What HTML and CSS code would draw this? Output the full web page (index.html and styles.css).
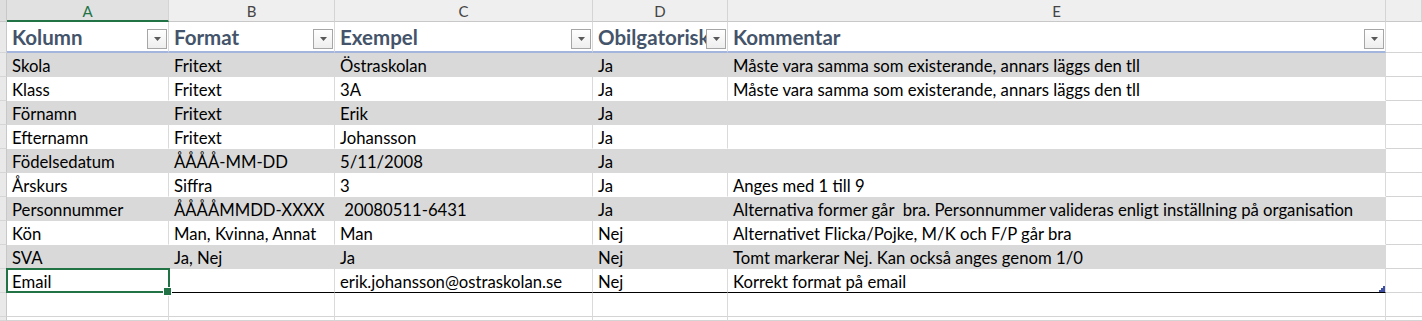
FILE: index.html
```html
<!DOCTYPE html>
<html lang="sv">
<head>
<meta charset="utf-8">
<title>Kolumner</title>
<link rel="stylesheet" href="styles.css">
</head>
<body>
<div class="sheet">
  <div class="row colhead">
    <div class="rh corner"></div>
    <div class="ch sel">A</div>
    <div class="ch">B</div>
    <div class="ch">C</div>
    <div class="ch">D</div>
    <div class="ch">E</div>
    <div class="ch"></div>
  </div>
  <div class="row thead">
    <div class="rh"></div>
    <div class="c hc"><span class="ht">Kolumn</span><span class="dd"><svg width="7" height="4" viewBox="0 0 7 4"><polygon points="0,0 7,0 3.5,4" fill="#595959"/></svg></span></div>
    <div class="c hc"><span class="ht">Format</span><span class="dd"><svg width="7" height="4" viewBox="0 0 7 4"><polygon points="0,0 7,0 3.5,4" fill="#595959"/></svg></span></div>
    <div class="c hc"><span class="ht">Exempel</span><span class="dd"><svg width="7" height="4" viewBox="0 0 7 4"><polygon points="0,0 7,0 3.5,4" fill="#595959"/></svg></span></div>
    <div class="c hc"><span class="ht">Obilgatorisk</span><span class="dd"><svg width="7" height="4" viewBox="0 0 7 4"><polygon points="0,0 7,0 3.5,4" fill="#595959"/></svg></span></div>
    <div class="c hc"><span class="ht">Kommentar</span><span class="dd"><svg width="7" height="4" viewBox="0 0 7 4"><polygon points="0,0 7,0 3.5,4" fill="#595959"/></svg></span></div>
    <div class="c out"></div>
  </div>
  <div class="row band">
    <div class="rh"></div>
    <div class="c">Skola</div><div class="c">Fritext</div><div class="c">Östraskolan</div><div class="c">Ja</div><div class="c">Måste vara samma som existerande, annars läggs den tll</div><div class="c out"></div>
  </div>
  <div class="row">
    <div class="rh"></div>
    <div class="c">Klass</div><div class="c">Fritext</div><div class="c">3A</div><div class="c">Ja</div><div class="c">Måste vara samma som existerande, annars läggs den tll</div><div class="c out"></div>
  </div>
  <div class="row band">
    <div class="rh"></div>
    <div class="c">Förnamn</div><div class="c">Fritext</div><div class="c">Erik</div><div class="c">Ja</div><div class="c"></div><div class="c out"></div>
  </div>
  <div class="row">
    <div class="rh"></div>
    <div class="c">Efternamn</div><div class="c">Fritext</div><div class="c">Johansson</div><div class="c">Ja</div><div class="c"></div><div class="c out"></div>
  </div>
  <div class="row band">
    <div class="rh"></div>
    <div class="c">Födelsedatum</div><div class="c">ÅÅÅÅ-MM-DD</div><div class="c">5/11/2008</div><div class="c">Ja</div><div class="c"></div><div class="c out"></div>
  </div>
  <div class="row">
    <div class="rh"></div>
    <div class="c">Årskurs</div><div class="c">Siffra</div><div class="c">3</div><div class="c">Ja</div><div class="c">Anges med 1 till 9</div><div class="c out"></div>
  </div>
  <div class="row band">
    <div class="rh"></div>
    <div class="c">Personnummer</div><div class="c">ÅÅÅÅMMDD-XXXX</div><div class="c">&nbsp;20080511-6431</div><div class="c">Ja</div><div class="c">Alternativa former går&nbsp; bra. Personnummer valideras enligt inställning på organisation</div><div class="c out"></div>
  </div>
  <div class="row">
    <div class="rh"></div>
    <div class="c">Kön</div><div class="c">Man, Kvinna, Annat</div><div class="c">Man</div><div class="c">Nej</div><div class="c">Alternativet Flicka/Pojke, M/K och F/P går bra</div><div class="c out"></div>
  </div>
  <div class="row band">
    <div class="rh"></div>
    <div class="c">SVA</div><div class="c">Ja, Nej</div><div class="c">Ja</div><div class="c">Nej</div><div class="c">Tomt markerar Nej. Kan också anges genom 1/0</div><div class="c out"></div>
  </div>
  <div class="row last">
    <div class="rh"></div>
    <div class="c active">Email</div><div class="c"></div><div class="c">erik.johansson@ostraskolan.se</div><div class="c">Nej</div><div class="c resize">Korrekt format på email<svg class="grip" width="6" height="6" viewBox="0 0 6 6"><path d="M4 0H6V6H0V4H2V2H4Z" fill="#3f4fa3"/></svg></div><div class="c out"></div>
  </div>
  <div class="row empty">
    <div class="rh"></div>
    <div class="c"></div><div class="c"></div><div class="c"></div><div class="c"></div><div class="c"></div><div class="c out"></div>
  </div>
  <div class="row empty tail">
    <div class="rh"></div>
    <div class="c"></div><div class="c"></div><div class="c"></div><div class="c"></div><div class="c"></div><div class="c out"></div>
  </div>
</div>
</body>
</html>
```

FILE: styles.css
```css
* { box-sizing: border-box; }
html, body { margin: 0; padding: 0; background: #fff; }
body {
  font-family: Lato, "Open Sans", sans-serif;
  font-size: 16.7px;
  color: #000;
  overflow: hidden;
}
.sheet {
  display: flex;
  flex-direction: column;
  width: 1422px;
  height: 321px;
  overflow: hidden;
}
.row {
  display: grid;
  grid-template-columns: 7px 162px 166px 258px 135px 658px 1fr;
  height: 24px;
  flex: none;
}
.row.tail { height: 4px; }
.rh {
  background: #e9e9e9;
  border-right: 1px solid #c8c8c8;
  border-bottom: 1px solid #d6d6d6;
}
.colhead { height: 22px; }
.colhead .corner { background: #dedede; border-bottom: 1px solid #c8c8c8; }
.ch {
  background: #efefef;
  border-right: 1px solid #d4d4d4;
  border-bottom: 1px solid #c8c8c8;
  color: #444;
  font-size: 15px;
  display: flex;
  align-items: center;
  justify-content: center;
  padding-top: 1px;
}
.ch.sel {
  background: #e1e1e1;
  color: #217346;
  border-bottom: 2px solid #217346;
}
.c {
  display: flex;
  align-items: flex-end;
  padding: 0 4px 1px 5px;
  white-space: nowrap;
  overflow: hidden;
  border-right: 1px solid #dadada;
  border-bottom: 1px solid transparent;
  line-height: 17px;
  min-width: 0;
}
.c.out { border-bottom: 1px solid #d4d4d4; border-right: none; background: #fff; }
.band .c { background: #d9d9d9; border-right-color: #d9d9d9; }
.band .c.out { background: #fff; border-bottom-color: #d4d4d4; }
.thead { height: 31px; }
.thead .hc {
  background: #fff;
  border-bottom: 2px solid #a3b5dc;
  padding: 0 1px 1px 5px;
  align-items: flex-end;
}
.ht {
  flex: 1;
  min-width: 0;
  overflow: hidden;
  font-weight: 700;
  font-size: 20.5px;
  line-height: 24px;
  color: #44546a;
  padding-bottom: 1px;
}
.dd {
  flex: none;
  width: 20px;
  height: 20px;
  margin-bottom: 1px;
  border: 1px solid #a6a6a6;
  background: linear-gradient(#ffffff, #eeeeee);
  display: flex;
  align-items: center;
  justify-content: center;
}
.dd svg { display: block; }
.last .c { border-bottom: 1px solid #000; }
.last .c.out { border-bottom: 1px solid #d4d4d4; }
.last .c.active { position: relative; overflow: visible; border-bottom-color: transparent; }
.c.active::after {
  content: "";
  position: absolute;
  left: -1px; top: -1px; right: -2px; bottom: -1px;
  border: 2px solid #217346;
  pointer-events: none;
}
.c.active::before {
  content: "";
  position: absolute;
  right: -4px; bottom: -4px;
  width: 7px; height: 7px;
  background: #217346;
  border: 1px solid #fff;
  z-index: 2;
}
.c.resize { position: relative; }
.grip { position: absolute; right: 0; bottom: 0; }
.empty .c { border-bottom: 1px solid #d4d4d4; border-right-color: #dadada; }
.empty .c.out { border-right: none; }
```
